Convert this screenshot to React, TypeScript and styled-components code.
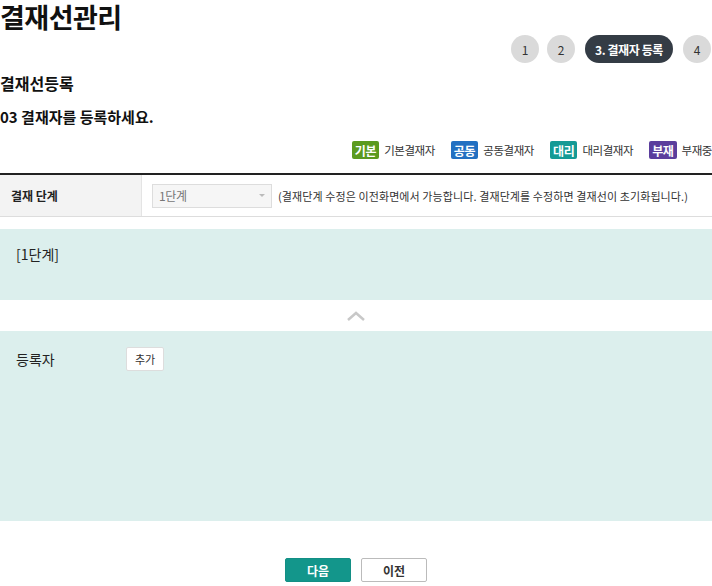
import React from 'react';
import styled, { createGlobalStyle } from 'styled-components';

const GlobalStyle = createGlobalStyle`
  html, body {
    margin: 0;
    padding: 0;
    background: #fff;
  }
  body {
    font-family: "Noto Sans CJK KR", "Noto Sans", sans-serif;
    color: #222;
  }
`;

const Page = styled.div`
  width: 712px;
  display: flex;
  flex-direction: column;
`;

const Title = styled.h1`
  margin: 0;
  padding-top: 1px;
  font-size: 27px;
  line-height: 31px;
  font-weight: 700;
  color: #111;
  letter-spacing: -0.5px;
`;

const Steps = styled.div`
  display: flex;
  justify-content: flex-end;
  gap: 8px;
  margin-top: 3px;
  margin-right: 1px;
`;

const Step = styled.div<{ $active?: boolean }>`
  height: 28px;
  min-width: 28px;
  padding: ${p => (p.$active ? '0 10px' : '0')};
  margin: ${p => (p.$active ? '0 2px' : '0')};
  border-radius: 14px;
  box-sizing: border-box;
  display: flex;
  align-items: center;
  justify-content: center;
  font-size: 12px;
  letter-spacing: -0.4px;
  font-weight: ${p => (p.$active ? 700 : 400)};
  background: ${p => (p.$active ? '#343c45' : '#dadada')};
  color: ${p => (p.$active ? '#fff' : '#333')};
`;

const SubTitle = styled.h2`
  margin: 9px 0 0;
  font-size: 16px;
  line-height: 22px;
  font-weight: 700;
  color: #111;
`;

const Guide = styled.h3`
  margin: 12px 0 0;
  font-size: 15px;
  line-height: 22px;
  font-weight: 700;
  color: #111;
`;

const Legend = styled.div`
  display: flex;
  justify-content: flex-end;
  gap: 16px;
  margin-top: 13px;
`;

const LegendItem = styled.div`
  display: flex;
  align-items: center;
  gap: 5px;
  font-size: 11.5px;
  letter-spacing: -0.45px;
  color: #333;
`;

const Tag = styled.span<{ $color: string }>`
  display: inline-flex;
  align-items: center;
  height: 18px;
  padding: 0 3px;
  border-radius: 2px;
  background: ${p => p.$color};
  color: #fff;
  font-size: 12px;
  letter-spacing: -0.3px;
  font-weight: 700;
`;

const Table = styled.div`
  margin-top: 14px;
  border-top: 2px solid #222;
  border-bottom: 1px solid #ddd;
  display: grid;
  grid-template-columns: 142px 1fr;
  height: 41px;
`;

const Th = styled.div`
  background: #f3f3f3;
  display: flex;
  align-items: center;
  padding-left: 11px;
  font-size: 12px;
  font-weight: 700;
  color: #222;
  border-right: 1px solid #e4e4e4;
`;

const Td = styled.div`
  display: flex;
  align-items: center;
  padding-left: 10px;
  gap: 6px;
  font-size: 11px;
  letter-spacing: 0.1px;
  color: #333;
  white-space: nowrap;
`;

const Select = styled.div`
  width: 120px;
  height: 24px;
  box-sizing: border-box;
  border: 1px solid #ddd;
  background: #f6f6f6;
  display: flex;
  align-items: center;
  justify-content: space-between;
  padding: 0 6px;
  font-size: 12px;
  letter-spacing: -0.3px;
  color: #777;
`;

const Caret = styled.span`
  width: 0;
  height: 0;
  border-left: 3px solid transparent;
  border-right: 3px solid transparent;
  border-top: 3px solid #bbb;
`;

const Panel = styled.div<{ $height: number }>`
  background: #dcefed;
  height: ${p => p.$height}px;
  box-sizing: border-box;
  padding: 16px 16px;
  display: flex;
  align-items: flex-start;
  font-size: 14px;
  color: #222;
`;

const StagePanel = styled(Panel)`
  margin-top: 12px;
  padding-top: 15px;
`;

const Arrow = styled.div`
  height: 31px;
  display: flex;
  align-items: center;
  justify-content: center;
`;

const Label = styled.div`
  width: 110px;
  line-height: 20px;
  margin-top: 2px;
`;

const SmallButton = styled.button`
  height: 24px;
  padding: 0 8px;
  border: 1px solid #ddd;
  border-radius: 2px;
  background: #fff;
  font-family: inherit;
  font-size: 11px;
  color: #333;
`;

const Actions = styled.div`
  display: flex;
  justify-content: center;
  gap: 10px;
  margin-top: 37px;
`;

const Button = styled.button<{ $primary?: boolean }>`
  width: 66px;
  height: 24px;
  border-radius: 2px;
  font-family: inherit;
  font-size: 12px;
  font-weight: 700;
  border: 1px solid ${p => (p.$primary ? '#138f85' : '#bbb')};
  background: ${p => (p.$primary ? '#13968b' : '#fff')};
  color: ${p => (p.$primary ? '#fff' : '#333')};
`;

const legend = [
  { tag: '기본', color: '#5b9a1f', label: '기본결재자' },
  { tag: '공동', color: '#2270c2', label: '공동결재자' },
  { tag: '대리', color: '#149a95', label: '대리결재자' },
  { tag: '부재', color: '#5b3e9d', label: '부재중' },
];

const App: React.FC = () => {
  return (
    <>
      <GlobalStyle />
      <Page>
        <Title>결재선관리</Title>
        <Steps>
          <Step>1</Step>
          <Step>2</Step>
          <Step $active>3. 결재자 등록</Step>
          <Step>4</Step>
        </Steps>
        <SubTitle>결재선등록</SubTitle>
        <Guide>03 결재자를 등록하세요.</Guide>
        <Legend>
          {legend.map(item => (
            <LegendItem key={item.tag}>
              <Tag $color={item.color}>{item.tag}</Tag>
              {item.label}
            </LegendItem>
          ))}
        </Legend>
        <Table>
          <Th>결재 단계</Th>
          <Td>
            <Select>
              1단계
              <Caret />
            </Select>
            (결재단계 수정은 이전화면에서 가능합니다. 결재단계를 수정하면 결재선이 초기화됩니다.)
          </Td>
        </Table>
        <StagePanel $height={71}>[1단계]</StagePanel>
        <Arrow>
          <svg width="20" height="12" viewBox="0 0 20 12">
            <path d="M2 10 L10 3 L18 10" fill="none" stroke="#c8c8c8" strokeWidth="2.5" />
          </svg>
        </Arrow>
        <Panel $height={190}>
          <Label>등록자</Label>
          <SmallButton>추가</SmallButton>
        </Panel>
        <Actions>
          <Button $primary>다음</Button>
          <Button>이전</Button>
        </Actions>
      </Page>
    </>
  );
};

export default App;
